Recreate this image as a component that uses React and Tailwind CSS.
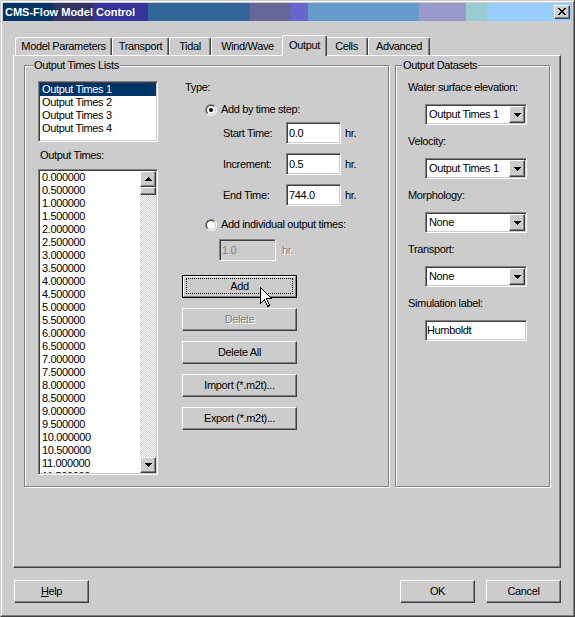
import React from "react";

function Raised({ className = "", children }) {
  return (
    <div
      className={
        "border border-t-white border-l-white border-r-[#404040] border-b-[#404040] shadow-[inset_-1px_-1px_#808080] bg-[#cccccc] " +
        className
      }
    >
      {children}
    </div>
  );
}

function Field({ className = "", children }) {
  return (
    <div
      className={
        "border border-t-[#808080] border-l-[#808080] border-r-white border-b-white p-px shadow-[inset_1px_1px_#404040,inset_-1px_-1px_#cccccc] " +
        className
      }
    >
      {children}
    </div>
  );
}

function DownArrow() {
  return (
    <svg width="7" height="4" viewBox="0 0 7 4" shapeRendering="crispEdges">
      <path d="M0 0h7v1H0z M1 1h5v1H1z M2 2h3v1H2z M3 3h1v1H3z" fill="#000" />
    </svg>
  );
}

function UpArrow() {
  return (
    <svg width="7" height="4" viewBox="0 0 7 4" shapeRendering="crispEdges">
      <path d="M3 0h1v1H3z M2 1h3v1H2z M1 2h5v1H1z M0 3h7v1H0z" fill="#000" />
    </svg>
  );
}

function Radio({ checked }) {
  return (
    <div className="w-[12px] h-[12px] shrink-0 rounded-full border border-t-[#808080] border-l-[#808080] border-r-white border-b-white">
      <div className="w-full h-full rounded-full border border-t-[#404040] border-l-[#404040] border-r-[#cccccc] border-b-[#cccccc] bg-white flex items-center justify-center">
        {checked && <div className="w-[4px] h-[4px] rounded-full bg-black" />}
      </div>
    </div>
  );
}

function Btn({ children, className = "", disabled = false }) {
  return (
    <Raised className={"h-[23px] flex items-center justify-center " + className}>
      {disabled ? (
        <span className="text-[#808080] [text-shadow:1px_1px_0_#ffffff]">{children}</span>
      ) : (
        children
      )}
    </Raised>
  );
}

function DefaultBtn({ children, className = "" }) {
  return (
    <div className={"h-[23px] border border-black flex " + className}>
      <div className="flex-1 flex border border-t-white border-l-white border-r-[#808080] border-b-[#808080] px-[2px] pt-[1px] pb-[2px]">
        <div className="flex-1 border border-dotted border-black flex items-center justify-center">
          {children}
        </div>
      </div>
    </div>
  );
}

function Select({ value }) {
  return (
    <Field className="ml-[17px] w-[102px] h-[21px] shrink-0 flex bg-white">
      <div className="flex-1 flex items-center pl-[2px] overflow-hidden whitespace-nowrap">{value}</div>
      <Raised className="w-[16px] h-full flex items-center justify-center">
        <DownArrow />
      </Raised>
    </Field>
  );
}

function Tab({ className = "", children }) {
  return (
    <div
      className={
        "mt-[2px] h-[18px] shrink-0 border-t border-l border-r border-t-white border-l-white border-r-[#404040] rounded-t-[3px] shadow-[inset_-1px_0_#808080] flex justify-center pt-[2px] whitespace-nowrap " +
        className
      }
    >
      {children}
    </div>
  );
}

export default function App() {
  const times = Array.from({ length: 24 }, (_, i) => (i * 0.5).toFixed(6));
  return (
    <div className="relative w-[575px] h-[617px] bg-[#cccccc] font-['Liberation_Sans',Arial,sans-serif] text-[11px] leading-[13px] tracking-[-0.35px] text-black overflow-hidden">
      <div className="w-full h-full border border-t-[#cccccc] border-l-[#cccccc] border-r-[#404040] border-b-[#404040]">
        <div className="w-full h-full border border-t-white border-l-white border-r-[#808080] border-b-[#808080] p-px flex flex-col">
          {/* Title bar */}
          <div className="h-[18px] shrink-0 flex items-center justify-between bg-[linear-gradient(90deg,#003366_0_50px,#333366_50px_90px,#333399_90px_145px,#336699_145px_247px,#666699_247px_287px,#6666cc_287px_305px,#6699cc_305px_416px,#9999cc_416px_463px,#99cccc_463px_484px,#99ccff_484px)]">
            <div className="pl-[2px] text-white font-bold tracking-normal whitespace-nowrap">CMS-Flow Model Control</div>
            <Raised className="mr-[2px] w-[16px] h-[14px] flex items-center justify-center pb-[1px]">
              <svg width="8" height="7" viewBox="0 0 8 7" shapeRendering="crispEdges">
                <path
                  d="M0 0h2v1H0z M6 0h2v1H6z M1 1h2v1H1z M5 1h2v1H5z M2 2h4v1H2z M3 3h2v1H3z M2 4h4v1H2z M1 5h2v1H1z M5 5h2v1H5z M0 6h2v1H0z M6 6h2v1H6z"
                  fill="#000"
                />
              </svg>
            </Raised>
          </div>

          {/* Tabs */}
          <div className="mt-[14px] h-[20px] shrink-0 flex items-start pl-[12px]">
            <Tab className="w-[97px]">Model Parameters</Tab>
            <Tab className="w-[57px]">Transport</Tab>
            <Tab className="w-[42px]">Tidal</Tab>
            <Tab className="w-[73px]">Wind/Wave</Tab>
            <div className="relative z-10 -mx-[2px] w-[45px] h-[21px] shrink-0 bg-[#cccccc] border-t border-l border-r border-t-white border-l-white border-r-[#404040] rounded-t-[3px] shadow-[inset_-1px_0_#808080] flex justify-center pt-[3px]">
              Output
            </div>
            <Tab className="w-[43px]">Cells</Tab>
            <Tab className="w-[62px]">Advanced</Tab>
          </div>

          {/* Panel */}
          <div className="ml-[10px] w-[548px] h-[513px] shrink-0 border border-t-white border-l-white border-r-[#404040] border-b-[#404040] shadow-[inset_-1px_-1px_#808080] flex items-start pl-[10px] pt-[9px]">
            {/* Output Times Lists */}
            <div className="relative w-[365px] h-[422px] shrink-0 border border-[#808080] shadow-[inset_1px_1px_#ffffff,1px_1px_#ffffff] flex items-start pl-[13px] pt-[15px]">
              <div className="absolute -top-[7px] left-[8px] px-[1px] bg-[#cccccc] whitespace-nowrap">Output Times Lists</div>

              <div className="w-[120px] shrink-0 flex flex-col">
                <Field className="h-[61px] bg-white">
                  <div className="h-[13px] bg-[#003366] text-white pl-[2px]">Output Times 1</div>
                  <div className="h-[13px] pl-[2px]">Output Times 2</div>
                  <div className="h-[13px] pl-[2px]">Output Times 3</div>
                  <div className="h-[13px] pl-[2px]">Output Times 4</div>
                </Field>
                <div className="mt-[7px] h-[13px] pl-[2px]">Output Times:</div>
                <Field className="mt-[7px] h-[306px] flex bg-white">
                  <div className="flex-1 overflow-hidden pl-[2px]">
                    {times.map((t) => (
                      <div key={t} className="h-[13px]">
                        {t}
                      </div>
                    ))}
                  </div>
                  <div className="w-[16px] flex flex-col bg-[image:repeating-conic-gradient(#ffffff_0_25%,#cccccc_0_50%)] bg-[length:2px_2px]">
                    <Raised className="h-[16px] flex items-center justify-center">
                      <UpArrow />
                    </Raised>
                    <Raised className="h-[8px]" />
                    <div className="flex-1" />
                    <Raised className="h-[16px] flex items-center justify-center">
                      <DownArrow />
                    </Raised>
                  </div>
                </Field>
              </div>

              <div className="ml-[24px] w-[178px] shrink-0 flex flex-col">
                <div className="h-[13px] pl-[3px]">Type:</div>
                <div className="mt-[9px] h-[13px] flex items-center pl-[23px]">
                  <Radio checked />
                  <span className="ml-[4px] whitespace-nowrap">Add by time step:</span>
                </div>
                <div className="mt-[6px] h-[22px] flex items-center pl-[41px]">
                  <span className="w-[63px] shrink-0">Start Time:</span>
                  <Field className="w-[55px] h-[22px] shrink-0 bg-white flex items-center pl-[2px]">0.0</Field>
                  <span className="ml-[4px]">hr.</span>
                </div>
                <div className="mt-[9px] h-[22px] flex items-center pl-[41px]">
                  <span className="w-[63px] shrink-0">Increment:</span>
                  <Field className="w-[55px] h-[22px] shrink-0 bg-white flex items-center pl-[2px]">0.5</Field>
                  <span className="ml-[4px]">hr.</span>
                </div>
                <div className="mt-[9px] h-[22px] flex items-center pl-[41px]">
                  <span className="w-[63px] shrink-0">End Time:</span>
                  <Field className="w-[55px] h-[22px] shrink-0 bg-white flex items-center pl-[2px]">744.0</Field>
                  <span className="ml-[4px]">hr.</span>
                </div>
                <div className="mt-[12px] h-[13px] flex items-center pl-[23px]">
                  <Radio />
                  <span className="ml-[4px] whitespace-nowrap">Add individual output times:</span>
                </div>
                <div className="mt-[8px] h-[22px] flex items-center pl-[37px]">
                  <Field className="w-[57px] h-[22px] shrink-0 bg-[#cccccc] flex items-center pl-[2px] text-[#808080]">1.0</Field>
                  <span className="ml-[6px] text-[#808080] [text-shadow:1px_1px_0_#ffffff]">hr.</span>
                </div>
                <div className="mt-[14px] w-[115px] flex flex-col gap-[10px]">
                  <DefaultBtn>Add</DefaultBtn>
                  <Btn disabled>Delete</Btn>
                  <Btn>Delete All</Btn>
                  <Btn>Import (*.m2t)...</Btn>
                  <Btn>Export (*.m2t)...</Btn>
                </div>
              </div>
            </div>

            {/* Output Datasets */}
            <div className="relative ml-[6px] w-[155px] h-[422px] shrink-0 border border-[#808080] shadow-[inset_1px_1px_#ffffff,1px_1px_#ffffff] flex flex-col pl-[12px] pt-[15px]">
              <div className="absolute -top-[7px] left-[6px] px-[1px] bg-[#cccccc] whitespace-nowrap">Output Datasets</div>
              <div className="h-[13px] whitespace-nowrap">Water surface elevation:</div>
              <div className="mt-[10px]"><Select value="Output Times 1" /></div>
              <div className="mt-[10px] h-[13px]">Velocity:</div>
              <div className="mt-[10px]"><Select value="Output Times 1" /></div>
              <div className="mt-[10px] h-[13px]">Morphology:</div>
              <div className="mt-[10px]"><Select value="None" /></div>
              <div className="mt-[10px] h-[13px]">Transport:</div>
              <div className="mt-[10px]"><Select value="None" /></div>
              <div className="mt-[10px] h-[13px]">Simulation label:</div>
              <Field className="mt-[10px] ml-[17px] w-[102px] h-[21px] shrink-0 bg-white flex items-center pl-[1px]">Humboldt</Field>
            </div>
          </div>

          {/* Bottom buttons */}
          <div className="mt-[12px] flex pl-[11px] pr-[11px]">
            <Btn className="w-[75px]">
              <span>
                <span className="underline">H</span>elp
              </span>
            </Btn>
            <Btn className="ml-auto w-[75px]">OK</Btn>
            <Btn className="ml-[11px] w-[75px]">Cancel</Btn>
          </div>
        </div>
      </div>

      {/* Mouse cursor */}
      <svg
        className="absolute left-[260px] top-[287px] z-20"
        width="13"
        height="21"
        viewBox="0 0 13 21"
        shapeRendering="crispEdges"
      >
        <path
          d="M0.5 0.5 V16.5 L4.5 12.5 L7.5 19.5 L9.5 18.5 L6.5 11.5 H11.5 Z"
          fill="#ffffff"
          stroke="#000000"
          strokeWidth="1"
          strokeLinejoin="miter"
        />
      </svg>
    </div>
  );
}
